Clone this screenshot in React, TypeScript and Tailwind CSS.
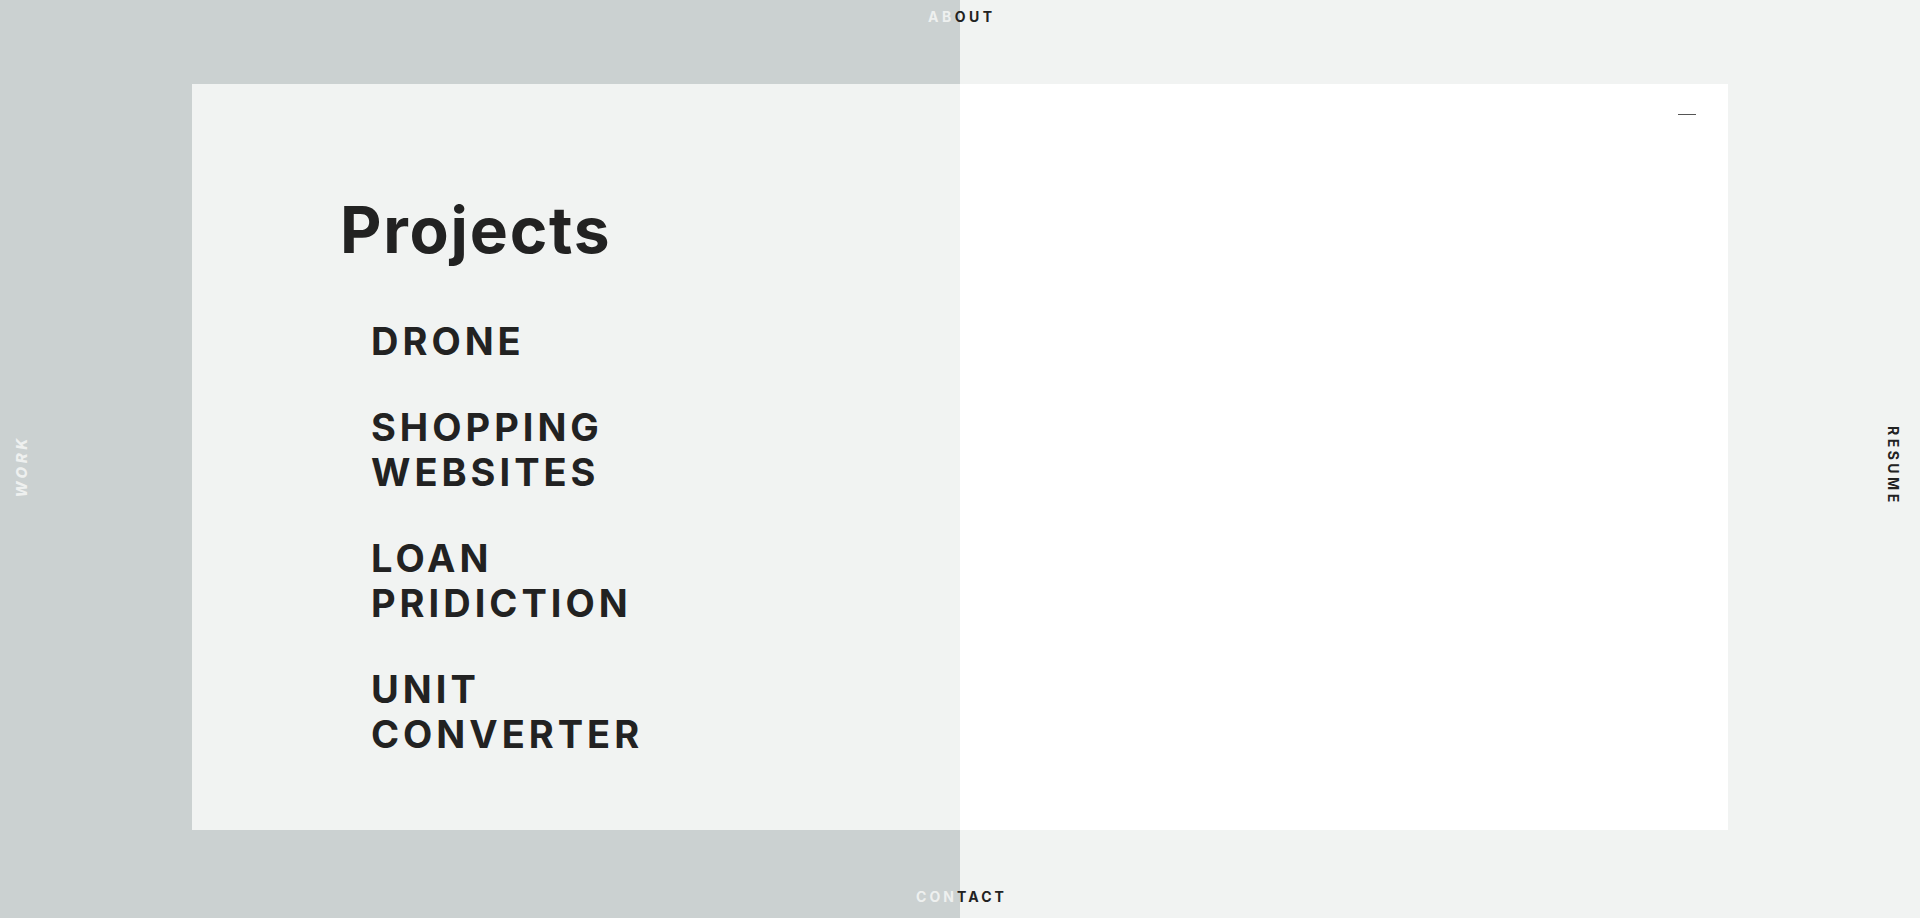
import React from "react";

const projects = [
  ["DRONE"],
  ["SHOPPING", "WEBSITES"],
  ["LOAN", "PRIDICTION"],
  ["UNIT", "CONVERTER"],
];

const App = () => {
  return (
    <div
      className="grid h-[918px] w-full grid-cols-[192px_1fr_192px] grid-rows-[84px_746px_88px] overflow-hidden bg-[linear-gradient(to_right,#cbd1d1_50%,#f1f3f2_50%)] text-[#222222]"
      style={{ fontFamily: "Inter, 'Open Sans', sans-serif" }}
    >
      {/* top nav */}
      <div className="col-span-3 flex justify-center pt-[9px]">
        <span className="text-[14px] leading-[16px] font-bold tracking-[0.25em] pl-[0.25em]">
          <span className="text-[#eef0ef]">AB</span>
          <span>OUT</span>
        </span>
      </div>

      {/* left side */}
      <div className="flex items-center justify-start pl-[14px] pt-[18px]">
        <span className="rotate-180 text-[15px] leading-[16px] font-extrabold italic tracking-[0.24em] text-[#eef0ef] [writing-mode:vertical-rl]">
          WORK
        </span>
      </div>

      {/* card */}
      <div className="grid grid-cols-2">
        <div className="bg-[#f1f3f2] pl-[148px] pt-[114px]">
          <h1 className="text-[64px] leading-[64px] font-bold tracking-[0.028em]">
            Projects
          </h1>
          <ul className="mt-[57px] flex flex-col gap-[41px] pl-[31px]">
            {projects.map((lines) => (
              <li
                key={lines.join(" ")}
                className="text-[38px] leading-[45px] font-bold tracking-[0.105em]"
              >
                {lines.map((l) => (
                  <div key={l}>{l}</div>
                ))}
              </li>
            ))}
          </ul>
        </div>
        <div className="flex justify-end bg-white pr-[32px] pt-[30px]">
          <div className="h-px w-[18px] bg-[#555555]" />
        </div>
      </div>

      {/* right side */}
      <div className="flex items-center justify-end pr-[19px] pt-[18px]">
        <span className="text-[14px] leading-[16px] font-bold tracking-[0.25em] [writing-mode:vertical-rl]">
          RESUME
        </span>
      </div>

      {/* bottom nav */}
      <div className="col-span-3 flex justify-center pt-[59px]">
        <span className="text-[14px] leading-[16px] font-bold tracking-[0.22em] pl-[0.22em]">
          <span className="text-[#eef0ef]">CON</span>
          <span>TACT</span>
        </span>
      </div>
    </div>
  );
};

export default App;
